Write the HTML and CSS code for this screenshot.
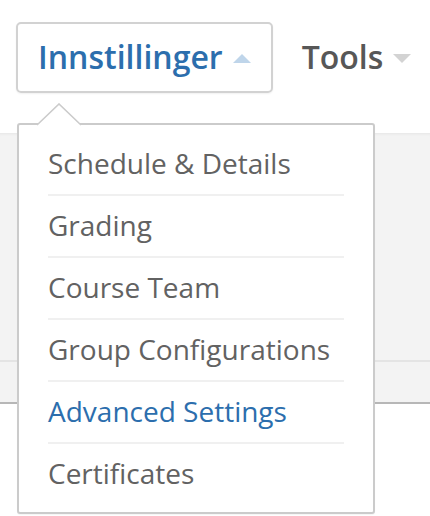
FILE: index.html
```
<!DOCTYPE html>
<html lang="no">
<head>
<meta charset="utf-8">
<title>Innstillinger</title>
<link rel="stylesheet" href="styles.css">
</head>
<body>
<div class="page">
<header class="header">
  <ul class="nav">
    <li class="nav-item is-open">
      <button class="nav-btn nav-btn--active" type="button">
        <span class="nav-label">Innstillinger</span>
        <svg class="caret" width="18" height="9" viewBox="0 0 18 9"><polygon points="0,9 9,0 18,9" fill="#bfd5ea"/></svg>
      </button>
      <div class="dropdown">
        <svg class="dropdown-arrow" width="44" height="23" viewBox="0 0 44 23"><polygon points="0,22 22,0 44,22" fill="#ffffff"/><polyline points="0,22 22,1 44,22" fill="none" stroke="#cbcbcb" stroke-width="1.6"/></svg>
        <ul class="menu">
          <li class="menu-item">Schedule &amp; Details</li>
          <li class="menu-item">Grading</li>
          <li class="menu-item">Course Team</li>
          <li class="menu-item">Group Configurations</li>
          <li class="menu-item menu-item--current">Advanced Settings</li>
          <li class="menu-item">Certificates</li>
        </ul>
      </div>
    </li>
    <li class="nav-item">
      <button class="nav-btn" type="button">
        <span class="nav-label">Tools</span>
        <svg class="caret" width="18" height="9" viewBox="0 0 18 9"><polygon points="0,0 18,0 9,9" fill="#d3d3d3"/></svg>
      </button>
    </li>
  </ul>
</header>
<section class="band">
  <div class="band-top"></div>
</section>
<main class="content"></main>
</div>
</body>
</html>
```
FILE: styles.css
```
* { box-sizing: border-box; }
html, body {
  margin: 0;
  padding: 0;
  background: #ffffff;
  font-family: "Open Sans", "Liberation Sans", sans-serif;
}
.page {
  min-height: 516px;
  display: flex;
  flex-direction: column;
}
.header {
  height: 133px;
  flex: none;
  padding: 22px 0 0 16px;
  position: relative;
  z-index: 2;
}
.nav {
  list-style: none;
  margin: 0;
  padding: 0;
  display: flex;
  gap: 7px;
}
.nav-item {
  position: relative;
}
.nav-btn {
  display: flex;
  align-items: center;
  gap: 10px;
  height: 71px;
  padding: 11px 20px 12px 20px;
  border: 2px solid transparent;
  border-radius: 5px;
  background: transparent;
  font-family: inherit;
  font-size: 32px;
  font-weight: 600;
  line-height: 44px;
  color: #575757;
  cursor: pointer;
}
.nav-btn--active {
  border-color: #d2d2d2;
  color: #2c6ead;
  box-shadow: 0 1px 2px rgba(0, 0, 0, 0.06);
}
.caret {
  display: block;
  flex: none;
  margin-top: 2px;
}
.dropdown {
  position: absolute;
  left: 1px;
  top: calc(100% + 30px);
  width: 358px;
  background: #ffffff;
  border: 2px solid #cbcbcb;
  border-radius: 3px;
  box-shadow: 0 1px 1px rgba(0, 0, 0, 0.04);
}
.dropdown-arrow {
  position: absolute;
  left: 18px;
  top: -22px;
  display: block;
}
.menu {
  list-style: none;
  margin: 0;
  padding: 9px 29px 8px 29px;
}
.menu-item {
  padding: 9px 0 11px 0;
  border-bottom: 2px solid #f0f0f0;
  font-size: 28px;
  line-height: 40px;
  color: #626262;
  white-space: nowrap;
}
.menu-item:last-child {
  border-bottom: 0;
}
.menu-item--current {
  color: #2c6ead;
}
.band {
  height: 271px;
  flex: none;
  background: #f3f3f3;
  border-bottom: 2px solid #b7b7b7;
  box-shadow: inset 0 3px 3px -2px rgba(0, 0, 0, 0.06);
}
.band-top {
  height: 229px;
  border-bottom: 2px solid #e4e4e4;
}
.content {
  flex: 1;
  background: #ffffff;
}
```
